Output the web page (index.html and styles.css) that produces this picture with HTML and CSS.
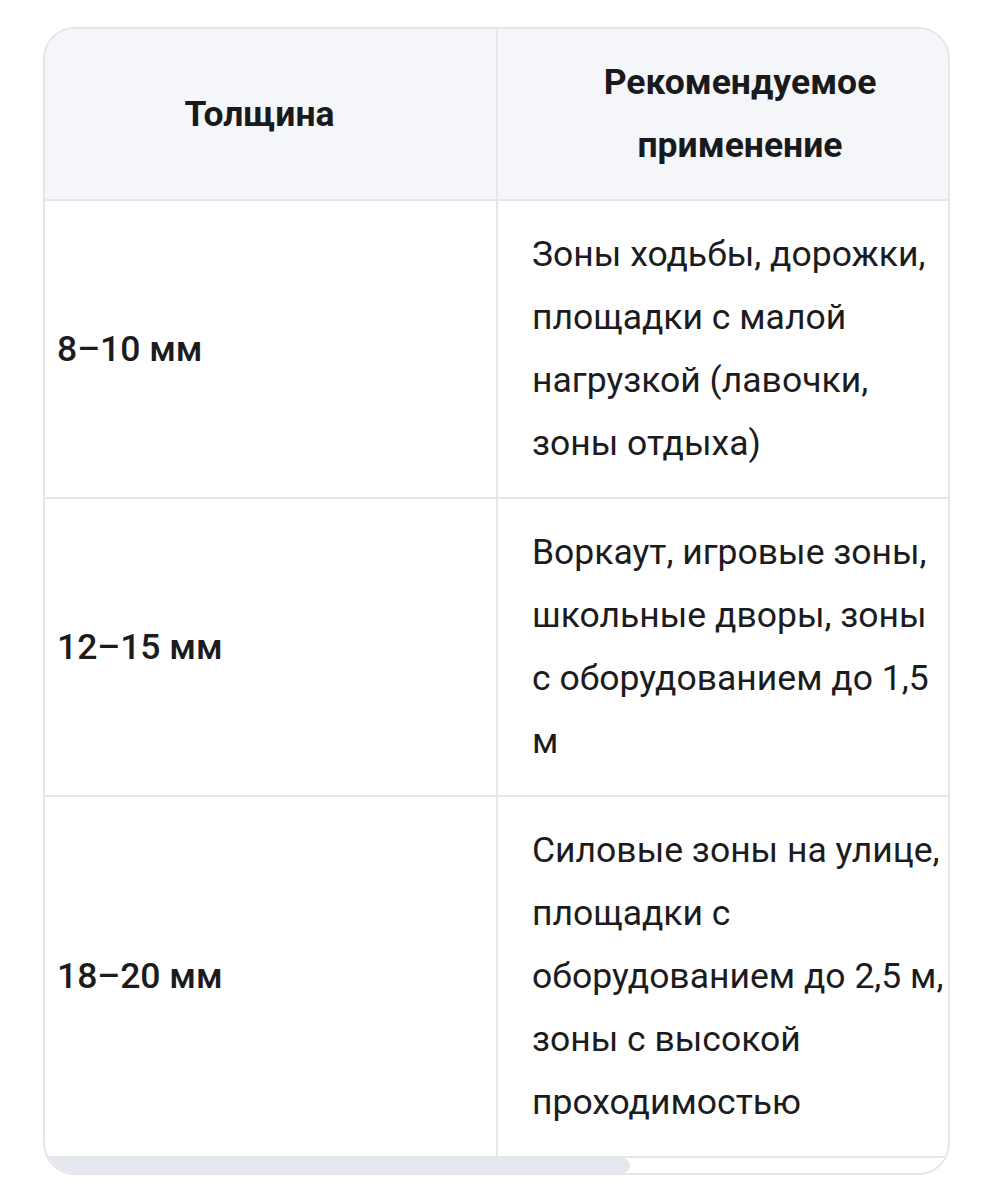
FILE: index.html
```html
<!DOCTYPE html>
<html lang="ru">
<head>
<meta charset="utf-8">
<title>Толщина</title>
<link rel="stylesheet" href="styles.css">
</head>
<body>
<div class="table-wrap">
  <table class="spec-table">
    <thead>
      <tr>
        <th class="col-a">Толщина</th>
        <th class="col-b">Рекомендуемое применение</th>
      </tr>
    </thead>
    <tbody>
      <tr>
        <td class="col-a">8–10 мм</td>
        <td class="col-b">Зоны ходьбы, дорожки, площадки с малой нагрузкой (лавочки, зоны отдыха)</td>
      </tr>
      <tr>
        <td class="col-a">12–15 мм</td>
        <td class="col-b">Воркаут, игровые зоны, школьные дворы, зоны с оборудованием до 1,5 м</td>
      </tr>
      <tr>
        <td class="col-a">18–20 мм</td>
        <td class="col-b">Силовые зоны на улице, площадки с оборудованием до 2,5 м, зоны с высокой проходимостью</td>
      </tr>
    </tbody>
  </table>
  <div class="scroll-track"><div class="scroll-thumb"></div></div>
</div>
</body>
</html>
```

FILE: styles.css
```css
html, body {
  margin: 0;
  padding: 0;
  background: #ffffff;
}

body {
  font-family: Roboto, "Liberation Sans", Arial, sans-serif;
  color: #1c1c1e;
  padding: 27px 0 0 43px;
}

.table-wrap {
  width: 903px;
  border: 2px solid #e5e6ea;
  border-radius: 32px;
  overflow: hidden;
  background: #ffffff;
}

.spec-table {
  width: 100%;
  border-collapse: collapse;
  table-layout: fixed;
}

.spec-table th,
.spec-table td {
  font-size: 35.5px;
  line-height: 63px;
  padding: 22px 0;
  vertical-align: middle;
  border-bottom: 2px solid #e5e6ea;
}

.spec-table th {
  background: #f5f6f9;
  font-weight: 700;
  text-align: center;
  color: #1a1a1c;
}

.spec-table .col-a {
  width: 452px;
  padding-left: 12px;
  padding-right: 34px;
  border-right: 2px solid #e5e6ea;
  box-sizing: border-box;
}

.spec-table td.col-a {
  font-weight: 500;
  text-align: left;
}

.spec-table .col-b {
  padding-left: 34px;
  padding-right: 0;
}

.spec-table td.col-b {
  font-weight: 400;
  text-align: left;
}

.scroll-track {
  height: 15px;
  background: #ffffff;
  display: flex;
}

.scroll-thumb {
  width: 585px;
  height: 100%;
  background: #e6e8ef;
  border-radius: 0 8px 8px 0;
}
```
